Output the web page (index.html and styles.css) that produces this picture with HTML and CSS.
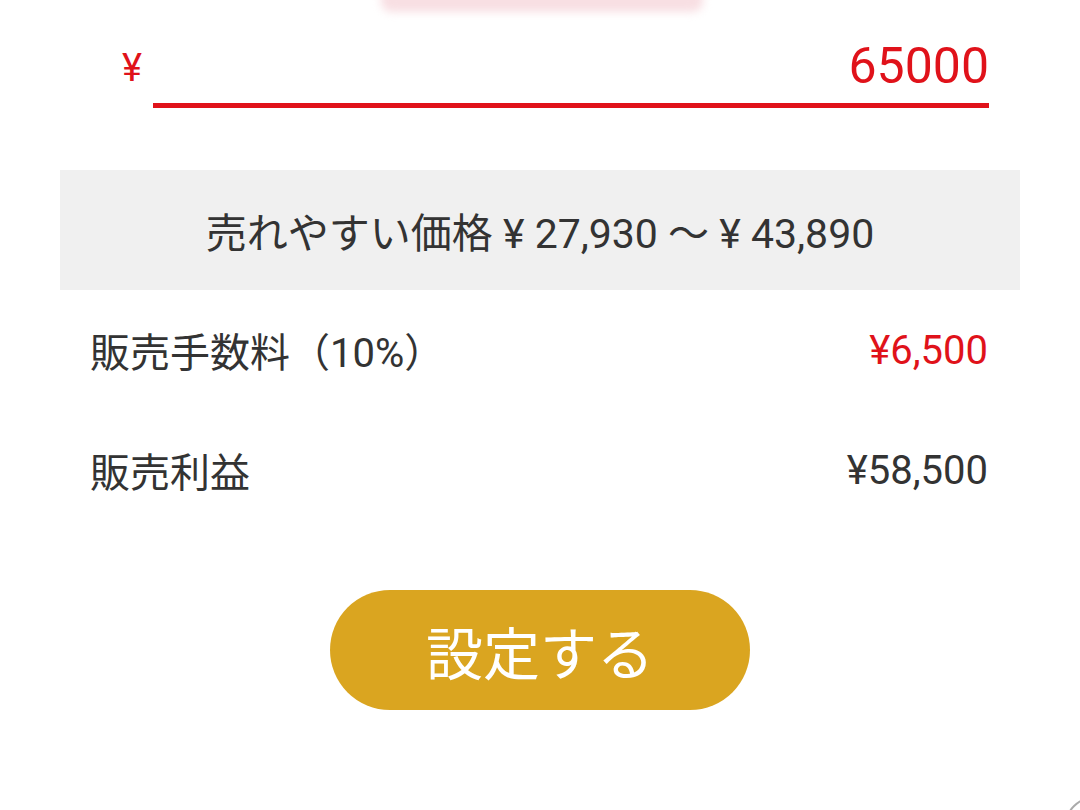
FILE: index.html
```html
<!DOCTYPE html>
<html lang="ja">
<head>
    <meta charset="UTF-8">
    <title>価格設定</title>
    <link rel="stylesheet" href="styles.css">
</head>
<body>
<div class="page">
    <div class="top-card"></div>
    <div class="price-input">
        <span class="yen">¥</span>
        <input type="text" class="price-field" value="65000">
    </div>
    <div class="suggest">売れやすい価格 ¥ 27,930 〜 ¥ 43,890</div>
    <div class="row">
        <span>販売手数料（10%）</span>
        <span class="red">¥6,500</span>
    </div>
    <div class="row">
        <span>販売利益</span>
        <span>¥58,500</span>
    </div>
    <div class="actions">
        <button class="submit">設定する</button>
    </div>
</div>
<div class="fab-clip"><div class="fab"></div></div>
</body>
</html>
```

FILE: styles.css
```css
html, body {
    overflow: hidden;
}
body {
    margin: 0;
    background-color: #fff;
    font-family: Roboto, "Noto Sans CJK JP", sans-serif;
    color: #333;
    height: 810px;
    position: relative;
}
.page {
    padding: 0 60px;
}
.top-card {
    width: 322px;
    height: 40px;
    margin: -28px auto 0 auto;
    position: relative;
    left: 2px;
    background-color: #f8dfe3;
    border-radius: 10px;
    filter: blur(4px);
}
.price-input {
    display: flex;
    align-items: flex-start;
    margin: 0 31px 0 62px;
    height: 108px;
}
.yen {
    color: #e0121a;
    font-size: 38px;
    width: 31px;
    padding-top: 34px;
}
.price-field {
    flex: 1;
    border: none;
    border-bottom: 5px solid #e0121a;
    outline: none;
    color: #e0121a;
    font-family: Roboto, sans-serif;
    font-size: 50px;
    text-align: right;
    padding: 0 0 11px 0;
    height: 68px;
    margin-top: 28px;
    box-sizing: border-box;
}
.suggest {
    margin-top: 50px;
    height: 120px;
    background-color: #f0f0f0;
    display: flex;
    align-items: center;
    justify-content: center;
    font-size: 41px;
}
.row {
    display: flex;
    justify-content: space-between;
    align-items: center;
    height: 120px;
    padding: 0 32px 0 30px;
    font-size: 40px;
}
.red {
    color: #e0121a;
}
.actions {
    display: flex;
    justify-content: center;
    padding-top: 60px;
}
.submit {
    width: 420px;
    height: 120px;
    border: none;
    border-radius: 60px;
    background-color: #daa520;
    color: #fff;
    font-family: Roboto, "Noto Sans CJK JP", sans-serif;
    font-size: 57px;
}
.fab-clip {
    position: absolute;
    right: 0;
    bottom: 0;
    width: 18px;
    height: 16px;
    overflow: hidden;
}
.fab {
    width: 60px;
    height: 60px;
    margin: 2px 0 0 2px;
    border: 2px solid #aaa;
    border-radius: 50%;
}
```
